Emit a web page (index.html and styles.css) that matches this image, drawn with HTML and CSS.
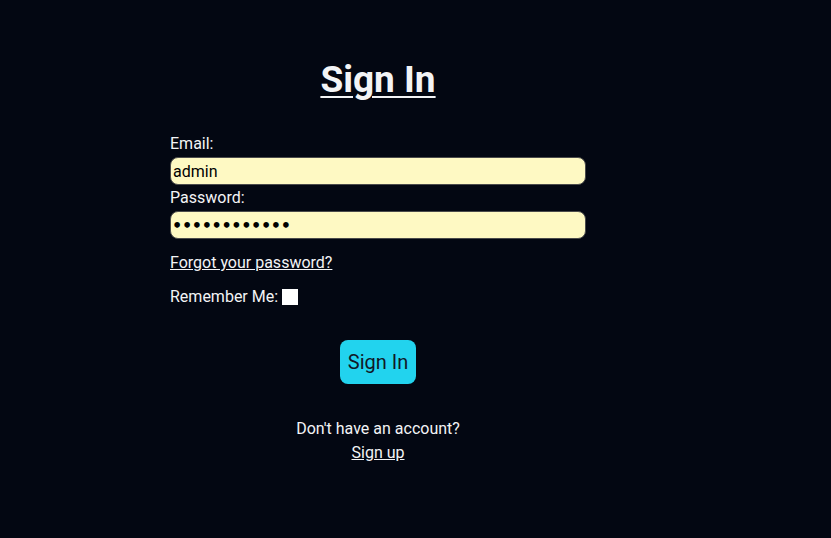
FILE: index.html
```html
<!DOCTYPE html>
<html>
<head>
<meta charset="utf-8">
<link rel="stylesheet" href="styles.css">
</head>
<body>
<main class="page">
  <div class="card">
    <h1 class="title">Sign In</h1>
    <form class="form">
      <label class="label" for="email">Email:</label>
      <input class="field" id="email" type="text" value="admin">
      <label class="label" for="pw">Password:</label>
      <input class="field field-pw" id="pw" type="password" value="adminadmin12">
      <a class="link forgot" href="#">Forgot your password?</a>
      <div class="remember">
        <span>Remember Me:</span>
        <span class="check"></span>
      </div>
      <div class="btn-row"><button type="button" class="btn">Sign In</button></div>
    </form>
    <div class="footer">
      <p class="muted">Don't have an account?</p>
      <a class="link" href="#">Sign up</a>
    </div>
  </div>
</main>
</body>
</html>
```
FILE: styles.css
```css
html, body {
  margin: 0;
  padding: 0;
  background: #030712;
  height: 100%;
}
body {
  font-family: Roboto, "Liberation Sans", sans-serif;
  color: #f3f4f6;
  font-size: 16px;
}
.page {
  padding-left: 170px;
  padding-top: 56px;
}
.card {
  width: 416px;
  display: flex;
  flex-direction: column;
}
.title {
  margin: 0;
  text-align: center;
  font-size: 37px;
  font-weight: 700;
  line-height: 48px;
  text-decoration: underline;
  text-decoration-thickness: 2px;
  text-underline-offset: 4px;
}
.form {
  margin-top: 30px;
  display: flex;
  flex-direction: column;
}
.label {
  line-height: 20px;
  height: 23px;
}
.field {
  box-sizing: border-box;
  height: 28px;
  width: 416px;
  border: 1px solid #4b4b4b;
  border-radius: 8px;
  background: #fef9c3;
  font-family: Roboto, "Liberation Sans", sans-serif;
  font-size: 16px;
  color: #000;
  padding: 0 2px;
  margin-bottom: 3px;
  outline: none;
}
.field-pw {
  font-family: "DejaVu Sans", sans-serif;
  font-weight: 700;
  font-size: 16px;
  letter-spacing: -0.35px;
  padding-left: 1px;
}
.link {
  color: #f3f4f6;
  text-decoration: underline;
}
.forgot {
  margin-top: 11px;
  line-height: 20px;
  align-self: flex-start;
}
.remember {
  margin-top: 14px;
  display: flex;
  align-items: center;
  gap: 4px;
  line-height: 20px;
}
.check {
  width: 16px;
  height: 16px;
  background: #fff;
}
.btn-row {
  margin-top: 33px;
  display: flex;
  justify-content: center;
}
.btn {
  width: 76px;
  height: 44px;
  border: none;
  border-radius: 8px;
  background: #22d3ee;
  color: #111827;
  font-family: Roboto, "Liberation Sans", sans-serif;
  font-size: 20px;
  padding: 0;
}
.footer {
  margin-top: 33px;
  text-align: center;
  line-height: 24px;
}
.muted {
  margin: 0;
}
```
